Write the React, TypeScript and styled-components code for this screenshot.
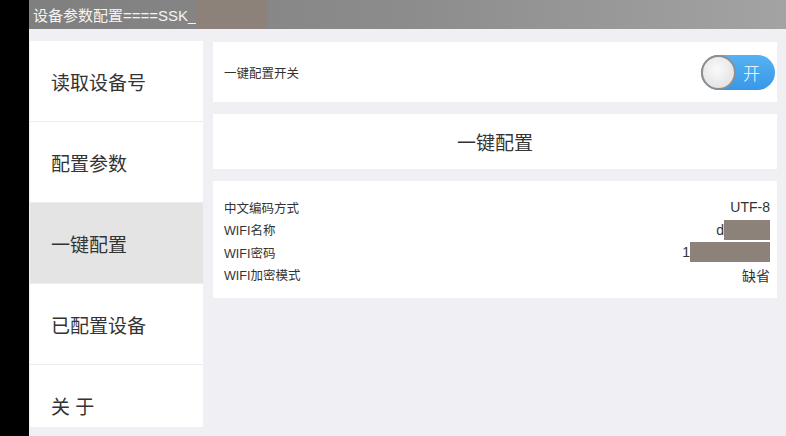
import React from 'react'
import styled, { createGlobalStyle } from 'styled-components'

const GlobalStyle = createGlobalStyle`
  html, body {
    margin: 0;
    padding: 0;
    width: 786px;
    height: 436px;
    overflow: hidden;
    font-family: "Liberation Sans", "Noto Sans CJK SC", sans-serif;
    background: #efeff4;
  }
`

const Screen = styled.div`
  display: flex;
  width: 786px;
  height: 436px;
`

const BlackEdge = styled.div`
  width: 29px;
  flex-shrink: 0;
  background: #000;
`

const Main = styled.div`
  flex: 1;
  display: flex;
  flex-direction: column;
  background: #efeff4;
`

const TitleBar = styled.div`
  height: 29px;
  display: flex;
  align-items: center;
  padding-left: 4px;
  background: linear-gradient(to right, #7f7f7f, #8c8c8c 50%, #a3a3a3);
  color: #f4f4f4;
  font-size: 15px;
`

const Redacted = styled.span<{ $w: number; $h: number }>`
  display: inline-block;
  width: ${({ $w }) => $w}px;
  height: ${({ $h }) => $h}px;
  background: #8c8279;
`

const Content = styled.div`
  flex: 1;
  display: flex;
  gap: 10px;
  padding: 12px 9px 0 1px;
`

const Sidebar = styled.div`
  width: 173px;
  height: 386px;
  overflow: hidden;
  display: flex;
  flex-direction: column;
  gap: 1px;
  background: #ececee;
`

const NavItem = styled.div<{ $active?: boolean }>`
  height: 80px;
  flex-shrink: 0;
  display: flex;
  align-items: center;
  padding-left: 21px;
  background: ${({ $active }) => ($active ? '#e4e4e4' : '#fff')};
  color: #333;
  font-size: 19px;
`

const Panel = styled.div`
  flex: 1;
  display: flex;
  flex-direction: column;
  gap: 12px;
  padding-top: 1px;
`

const Card = styled.div`
  background: #fff;
`

const SwitchRow = styled(Card)`
  height: 60px;
  display: flex;
  align-items: center;
  justify-content: space-between;
  padding: 0 2px 0 11px;
  font-size: 12.5px;
  color: #333;
`

const Toggle = styled.div`
  position: relative;
  width: 74px;
  height: 35px;
  border-radius: 18px;
  background: linear-gradient(to bottom, #56b2f2, #3898e8);
  display: flex;
  align-items: center;
  justify-content: flex-end;
  padding-right: 15px;
  box-sizing: border-box;
  color: #fff;
  font-size: 17px;
  font-family: "Noto Sans CJK SC", sans-serif;
  font-weight: 300;
`

const Knob = styled.div`
  position: absolute;
  left: 0;
  top: 0;
  width: 35px;
  height: 35px;
  box-sizing: border-box;
  border-radius: 50%;
  border: 2px solid #8e8e8e;
  background: radial-gradient(circle at 45% 40%, #fafafa, #dcdcdc);
`

const ActionCard = styled(Card)`
  height: 55px;
  display: flex;
  align-items: center;
  justify-content: center;
  font-size: 19px;
  color: #333;
`

const InfoCard = styled(Card)`
  display: flex;
  flex-direction: column;
  padding: 15px 7px 12px 11px;
  height: 117px;
  box-sizing: border-box;
`

const InfoRow = styled.div`
  height: 23px;
  display: flex;
  align-items: center;
  justify-content: space-between;
  font-size: 12.5px;
  color: #333;
`

const Value = styled.span`
  display: flex;
  align-items: center;
  font-size: 14px;
`

const nav = ['读取设备号', '配置参数', '一键配置', '已配置设备', '关 于']

export default function App() {
  return (
    <>
      <GlobalStyle />
      <Screen>
        <BlackEdge />
        <Main>
          <TitleBar>
            设备参数配置====SSK_
            <Redacted $w={72} $h={29} />
          </TitleBar>
          <Content>
            <Sidebar>
              {nav.map((n) => (
                <NavItem key={n} $active={n === '一键配置'}>
                  {n}
                </NavItem>
              ))}
            </Sidebar>
            <Panel>
              <SwitchRow>
                一键配置开关
                <Toggle>
                  <Knob />开
                </Toggle>
              </SwitchRow>
              <ActionCard>一键配置</ActionCard>
              <InfoCard>
                <InfoRow>
                  中文编码方式<Value>UTF-8</Value>
                </InfoRow>
                <InfoRow>
                  WIFI名称
                  <Value>
                    d<Redacted $w={46} $h={20} />
                  </Value>
                </InfoRow>
                <InfoRow>
                  WIFI密码
                  <Value>
                    1<Redacted $w={80} $h={20} />
                  </Value>
                </InfoRow>
                <InfoRow>
                  WIFI加密模式<Value>缺省</Value>
                </InfoRow>
              </InfoCard>
            </Panel>
          </Content>
        </Main>
      </Screen>
    </>
  )
}
